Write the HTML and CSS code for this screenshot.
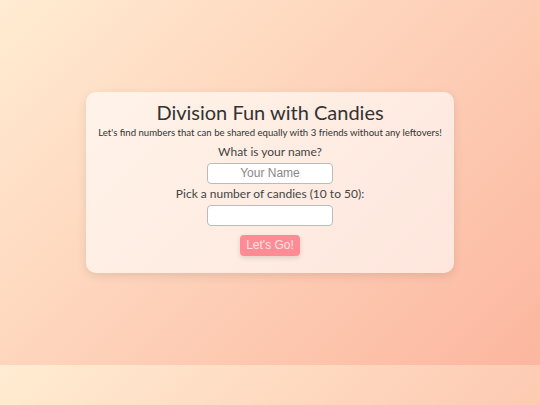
FILE: index.html
```html
<!DOCTYPE html>
<html lang="en">
<head>
<meta charset="utf-8">
<title>Division Fun with Candies</title>
<link rel="stylesheet" href="styles.css">
</head>
<body>
<main class="card">
  <h1 class="title">Division Fun with Candies</h1>
  <p class="intro">Let's find numbers that can be shared equally with 3 friends without any leftovers!</p>
  <label class="label" for="name">What is your name?</label>
  <input class="field" id="name" type="text" placeholder="Your Name">
  <label class="label" for="count">Pick a number of candies (10 to 50):</label>
  <input class="field" id="count" type="number">
  <button class="go" type="button">Let's Go!</button>
</main>
</body>
</html>
```
FILE: styles.css
```css
body {
  margin: 0;
  height: 90vh;
  display: flex;
  justify-content: center;
  align-items: center;
  background: linear-gradient(135deg, #ffecd2 0%, #fcb69f 100%);
  font-family: "Lato", "Liberation Sans", sans-serif;
  color: #333;
}
.card {
  width: 368px;
  box-sizing: border-box;
  padding: 8px 10px 17px;
  background: rgba(255, 255, 255, 0.6);
  border-radius: 10px;
  box-shadow: 0 3px 10px rgba(0, 0, 0, 0.1);
  display: flex;
  flex-direction: column;
  align-items: center;
  text-align: center;
}
.title {
  margin: 0;
  font-size: 20px;
  font-weight: 400;
  line-height: 24px;
  color: #333;
}
.intro {
  margin: 3px 0 6px;
  font-size: 9.6px;
  line-height: 12px;
  white-space: nowrap;
  color: #333;
}
.label {
  font-size: 12px;
  line-height: 14px;
  color: #444;
}
.field {
  margin: 4px 0 3px;
  width: 126px;
  height: 21px;
  box-sizing: border-box;
  border: 1px solid #bbb;
  border-radius: 4px;
  background: #fff;
  font-family: "Liberation Sans", Arial, sans-serif;
  font-size: 12px;
  text-align: center;
  padding: 0 4px;
}
.field::placeholder {
  color: #888;
}
.go {
  margin-top: 6px;
  width: 60px;
  height: 21px;
  border: none;
  border-radius: 4px;
  background: #ff8c94;
  color: #fde3e5;
  font-family: "Liberation Sans", Arial, sans-serif;
  font-size: 12px;
  box-shadow: 0 2px 5px rgba(0, 0, 0, 0.12);
  padding: 0;
}
```
